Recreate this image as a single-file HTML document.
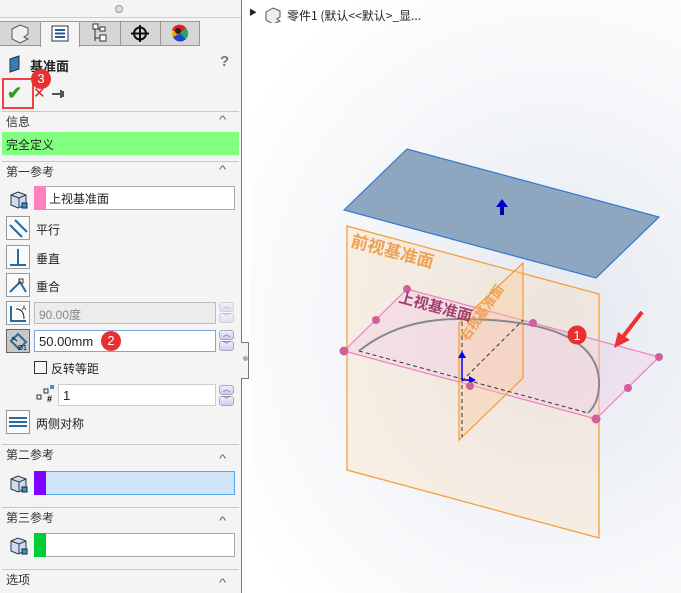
<!DOCTYPE html>
<html><head><meta charset="utf-8">
<style>
*{margin:0;padding:0;box-sizing:border-box}
body{width:681px;height:593px;overflow:hidden;position:relative;font-family:"Liberation Sans","Noto Sans CJK SC",sans-serif;font-size:12px;color:#222;background:#fff}
.a{position:absolute}
#lp{left:0;top:0;width:242px;height:593px;background:#f4f4f4;border-right:1px solid #777}
.sec{position:absolute;left:2px;width:237px;height:1px;background:#c8c8c8}
.hd{position:absolute;left:6px;font-size:12px;color:#333}
.car{position:absolute;left:220px;font-size:11px;color:#666;transform:scaleX(1.4)}
.ib{position:absolute;left:6px;width:24px;height:24px;border:1px solid #999;background:#fafafa}
.lb{position:absolute;left:36px;font-size:12px}
.sp{position:absolute;left:219px;width:15px;height:10px;border:1px solid #aab;border-radius:3px;background:linear-gradient(#eef,#cce);font-size:7px;line-height:7px;text-align:center;color:#337}
</style></head><body>
<div id="lp" class="a">
 <div class="a" style="left:0;top:17px;width:241px;height:1px;background:#ccc"></div>
 <div class="a" style="left:115px;top:5px;width:8px;height:8px;border-radius:50%;border:1px solid #999;background:#ddd"></div>
 <div class="a" style="left:0;top:21px;width:200px;height:25px;background:#d6d6d6;border:1px solid #999;border-left:none"></div>
 <div class="a" style="left:40px;top:21px;width:40px;height:26px;background:#f4f4f4;border-left:1px solid #999;border-right:1px solid #999;border-top:1px solid #999"></div>
 <div class="a" style="left:120px;top:21px;width:1px;height:25px;background:#999"></div>
 <div class="a" style="left:160px;top:21px;width:1px;height:25px;background:#999"></div>
 <svg class="a" style="left:0;top:21px" width="200" height="25">
  <path d="M12 8l8-4 8 3v6l-4 3 4 2-8 4-8-4z" fill="#eee" stroke="#555"/>
  <rect x="52" y="5" width="16" height="15" fill="#fff" stroke="#334"/><path d="M55 9h10M55 12.5h10M55 16h10" stroke="#2a5a9a" stroke-width="2"/>
  <path d="M95 4v16M95 8h5M95 17h5" stroke="#333" fill="none"/><rect x="93" y="3" width="5" height="5" fill="#fff" stroke="#333"/><rect x="100" y="6" width="5" height="4" fill="#fff" stroke="#333"/><rect x="100" y="14" width="6" height="6" fill="#fff" stroke="#333"/>
  <circle cx="140" cy="12.5" r="6" fill="none" stroke="#111" stroke-width="2"/><path d="M131 12.5h18M140 4v17" stroke="#111" stroke-width="2"/>
  <circle cx="180" cy="12.5" r="8" fill="#e8b000"/><path d="M180 12.5L172 9A8 8 0 0 1 186 7z" fill="#d22"/><path d="M180 12.5L186 7A8 8 0 0 1 186 18z" fill="#2a6"/><path d="M180 12.5L186 18A8 8 0 0 1 173 16z" fill="#24c"/><circle cx="178" cy="10" r="3" fill="#222"/>
 </svg>
 <svg class="a" style="left:8px;top:55px" width="14" height="18"><path d="M2 4l9-3v13l-9 3z" fill="#3a7db0" stroke="#235"/></svg>
 <div class="a" style="left:30px;top:56px;font-weight:bold;font-size:13px">基准面</div>
 <div class="a" style="left:220px;top:53px;font-weight:bold;font-size:15px;color:#777">?</div>
 <div class="a" style="left:2px;top:78px;width:32px;height:31px;border:2px solid #f04040"></div>
 <div class="a" style="left:7px;top:83px;font-size:18px;color:#3a9a20;font-weight:bold">✔</div>
 <div class="a" style="left:33px;top:84px;font-size:15px;color:#d22">✕</div>
 <svg class="a" style="left:51px;top:88px" width="16" height="12"><path d="M1 6h9M10 2v8M12 3v6" stroke="#555" stroke-width="2"/></svg>
 <div class="a" style="left:31px;top:69px;width:20px;height:20px;border-radius:50%;background:#e83030;color:#fff;font-size:13px;text-align:center;line-height:20px">3</div>
 <div class="sec" style="top:111px"></div>
 <div class="hd" style="top:113px">信息</div><div class="car" style="top:114px">^</div>
 <div class="a" style="left:2px;top:132px;width:237px;height:23px;background:#80ff80"></div>
 <div class="a" style="left:6px;top:136px">完全定义</div>
 <div class="sec" style="top:161px"></div>
 <div class="hd" style="top:163px">第一参考</div><div class="car" style="top:164px">^</div>
 <svg class="a" style="left:9px;top:190px" width="20" height="20"><path d="M2 5l7-3 8 3v10l-8 3-7-3z" fill="#cde" stroke="#334"/><path d="M2 5l8 3 7-3M10 8v10" stroke="#334" fill="none"/><rect x="13" y="13" width="5" height="5" fill="#39c" stroke="#124"/></svg>
 <div class="a" style="left:34px;top:186px;width:201px;height:24px;border:1px solid #aaa;background:#fff"></div>
 <div class="a" style="left:34px;top:186px;width:12px;height:24px;background:#ff80c0"></div>
 <div class="a" style="left:49px;top:190px;font-size:12px">上视基准面</div>
 <div class="ib" style="top:216px"><svg width="22" height="22"><path d="M3 8l12 12M8 3l12 12" stroke="#2a6a9a" stroke-width="2"/></svg></div>
 <div class="lb" style="top:221px">平行</div>
 <div class="ib" style="top:245px"><svg width="22" height="22"><path d="M11 3v16M3 19h16" stroke="#2a6a9a" stroke-width="2"/></svg></div>
 <div class="lb" style="top:250px">垂直</div>
 <div class="ib" style="top:273px"><svg width="22" height="22"><path d="M3 18l10-10 6 10" stroke="#2a6a9a" stroke-width="2" fill="none"/><rect x="12" y="5" width="4" height="4" fill="none" stroke="#333"/></svg></div>
 <div class="lb" style="top:278px">重合</div>
 <div class="ib" style="top:301px"><svg width="22" height="22"><path d="M4 4v15h15" stroke="#2a6a9a" stroke-width="2" fill="none"/><path d="M9 7q8 0 8 10" stroke="#222" fill="none"/><text x="15" y="8" font-size="6" font-family="Liberation Sans">A</text></svg></div>
 <div class="a" style="left:34px;top:302px;width:182px;height:22px;border:1px solid #bbb;background:#ececec;color:#888;padding:3px 4px">90.00度</div>
 <div class="sp" style="top:302px;opacity:.5">︿</div><div class="sp" style="top:313px;opacity:.5">﹀</div>
 <div class="ib" style="top:329px;background:#c8c8c8;border-color:#666"><svg width="22" height="22"><path d="M4 11l7-7 8 8-7 7z" fill="none" stroke="#2a6a9a" stroke-width="2"/><path d="M5 7l5 4" stroke="#111"/><text x="11" y="20" font-size="7" font-family="Liberation Sans">D1</text></svg></div>
 <div class="a" style="left:34px;top:330px;width:182px;height:22px;border:1px solid #7aa7d8;background:#fff;padding:3px 4px;font-size:13px">50.00mm</div>
 <div class="a" style="left:101px;top:331px;width:20px;height:20px;border-radius:50%;background:#e83030;color:#fff;font-size:13px;text-align:center;line-height:20px">2</div>
 <div class="sp" style="top:330px">︿</div><div class="sp" style="top:341px">﹀</div>
 <div class="a" style="left:34px;top:361px;width:13px;height:13px;border:1px solid #333;background:#f8f8f8"></div>
 <div class="a" style="left:51px;top:360px">反转等距</div>
 <svg class="a" style="left:36px;top:385px" width="20" height="18"><rect x="1" y="10" width="4" height="4" fill="none" stroke="#333"/><rect x="8" y="4" width="4" height="4" fill="none" stroke="#333"/><rect x="14" y="0" width="4" height="4" fill="#39c"/><text x="11" y="17" font-size="9" font-weight="bold" font-family="Liberation Sans">#</text></svg>
 <div class="a" style="left:58px;top:384px;width:158px;height:22px;border:1px solid #ccc;background:#fff;padding:3px 4px;font-size:13px">1</div>
 <div class="sp" style="top:385px">︿</div><div class="sp" style="top:396px">﹀</div>
 <div class="ib" style="top:410px"><svg width="22" height="22"><path d="M2 7h18M2 11h18M2 15h18" stroke="#2a6a9a" stroke-width="2"/></svg></div>
 <div class="lb" style="top:415px">两侧对称</div>
 <div class="sec" style="top:444px"></div>
 <div class="hd" style="top:446px">第二参考</div><div class="car" style="top:453px">^</div>
 <svg class="a" style="left:9px;top:474px" width="20" height="20"><path d="M2 5l7-3 8 3v10l-8 3-7-3z" fill="#cde" stroke="#334"/><path d="M2 5l8 3 7-3M10 8v10" stroke="#334" fill="none"/><rect x="13" y="13" width="5" height="5" fill="#39c" stroke="#124"/></svg>
 <div class="a" style="left:34px;top:471px;width:201px;height:24px;border:1px solid #55a8e8;background:#d0e4f7"></div>
 <div class="a" style="left:34px;top:471px;width:12px;height:24px;background:#8000ff"></div>
 <div class="sec" style="top:507px"></div>
 <div class="hd" style="top:509px">第三参考</div><div class="car" style="top:515px">^</div>
 <svg class="a" style="left:9px;top:536px" width="20" height="20"><path d="M2 5l7-3 8 3v10l-8 3-7-3z" fill="#cde" stroke="#334"/><path d="M2 5l8 3 7-3M10 8v10" stroke="#334" fill="none"/><rect x="13" y="13" width="5" height="5" fill="#39c" stroke="#124"/></svg>
 <div class="a" style="left:34px;top:533px;width:201px;height:24px;border:1px solid #aaa;background:#fff"></div>
 <div class="a" style="left:34px;top:533px;width:12px;height:24px;background:#00cc33"></div>
 <div class="sec" style="top:569px"></div>
 <div class="hd" style="top:571px">选项</div><div class="car" style="top:577px">^</div>
</div>
<div class="a" style="left:241px;top:342px;width:8px;height:37px;border:1px solid #777;border-left:none;background:#f4f4f4"></div>
<div class="a" style="left:243px;top:356px;width:5px;height:5px;border-radius:50%;background:#aaa"></div>
<div class="a" style="left:250px;top:0;width:431px;height:593px;background:radial-gradient(ellipse at 70% 55%,#e4e8f0 0%,#f4f6f9 50%,#fff 85%)"></div>
<div class="a" style="left:249px;top:7px;font-size:8px">▶</div>
<svg class="a" style="left:263px;top:5px" width="20" height="18"><path d="M3 7l7-4 7 3v6l-3 2 3 2-7 3-7-4z" fill="#eee" stroke="#555"/></svg>
<div class="a" style="left:287px;top:7px;font-size:12px;font-family:'Noto Sans CJK SC','Liberation Sans',sans-serif">零件1 (默认&lt;&lt;默认&gt;_显...</div>
<svg class="a" style="left:0;top:0" width="681" height="593">
 <polygon points="344,210 407,149 659,217 596,278" fill="#8ea6bf" stroke="#2f7ad0" stroke-width="1.2"/>
 <path d="M502 215v-8" stroke="#00a" stroke-width="4"/><path d="M496 207l6-8 6 8z" fill="#00c"/>
 <polygon points="347,226 599,294 599,538 347,470" fill="rgba(255,220,180,0.3)" stroke="#f59a30" stroke-width="1.2"/>
 <polygon points="344,351 407,289 659,357 596,419" fill="rgba(240,200,230,0.35)" stroke="#f080c0" stroke-width="1.2"/>
 <polygon points="459,323 523,263 523,378 459,440" fill="rgba(255,200,150,0.35)" stroke="#f59a30" stroke-width="1.2"/>
 <path d="M359 351Q400 318 462 319Q595 320 599 380Q600 402 588 413" fill="none" stroke="#888" stroke-width="2"/>
 <path d="M359 351L588 413M462 322V437M462 381L523 320" stroke="#333" stroke-dasharray="4,3" fill="none"/>
 <path d="M462 380v-23" stroke="#00f" stroke-width="1.5"/><path d="M458 358l4-7 4 7z" fill="#00f"/>
 <path d="M462 380h8" stroke="#00f" stroke-width="1.5"/><path d="M469 376l7 4-7 4z" fill="#00f"/>
 <g fill="#d0609a"><circle cx="344" cy="351" r="4.5"/><circle cx="407" cy="289" r="4"/><circle cx="659" cy="357" r="4"/><circle cx="596" cy="419" r="4.5"/><circle cx="376" cy="320" r="4"/><circle cx="533" cy="323" r="4"/><circle cx="628" cy="388" r="4"/><circle cx="470" cy="386" r="4"/></g>
 <text x="350" y="246" transform="rotate(15 350 246)" font-size="17" font-weight="bold" fill="#f0a050" font-family="Noto Sans CJK SC">前视基准面</text>
 <text x="398" y="302" transform="rotate(15 398 302)" font-size="15" font-weight="bold" fill="#a04070" font-family="Noto Sans CJK SC">上视基准面</text>
 <text x="467" y="342" transform="rotate(-55 467 342)" font-size="13" font-weight="bold" fill="#f0a050" font-family="Noto Sans CJK SC">右视基准面</text>
 <circle cx="577" cy="335" r="9.5" fill="#e83030"/><text x="577" y="340" text-anchor="middle" font-size="13" fill="#fff" font-family="Liberation Sans">1</text>
 <path d="M642 312L622 338" stroke="#f03030" stroke-width="4"/><path d="M614 348l4-16 12 8z" fill="#f03030"/>
</svg>
</body></html>
